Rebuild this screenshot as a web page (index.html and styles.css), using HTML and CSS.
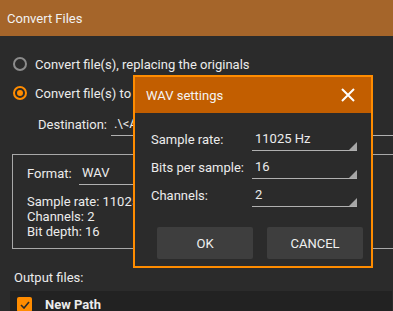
FILE: index.html
```html
<!DOCTYPE html>
<html lang="en">
<head>
    <meta charset="UTF-8">
    <title>Convert Files</title>
    <link rel="stylesheet" href="styles.css">
</head>
<body>
    <div class="titlebar">Convert Files</div>

    <div class="content">
        <label class="radio-row">
            <span class="radio"></span>
            <span>Convert file(s), replacing the originals</span>
        </label>
        <label class="radio-row">
            <span class="radio checked"></span>
            <span>Convert file(s) to a new location</span>
        </label>
        <div class="dest-row">
            <span class="dest-label">Destination:</span>
            <span class="dest-input">.\&lt;Artist&gt;\&lt;Album&gt;</span>
        </div>

        <div class="format-box">
            <div class="format-row">
                <span>Format:</span>
                <span class="format-select">WAV</span>
            </div>
            <div class="format-info">
                <div>Sample rate: 11025 Hz</div>
                <div>Channels: 2</div>
                <div>Bit depth: 16</div>
            </div>
        </div>

        <div class="output-label">Output files:</div>
        <div class="output-row">
            <span class="checkbox">
                <svg width="10" height="8" viewBox="0 0 10 8"><path d="M1 4 L4 7 L9 1" fill="none" stroke="#2a2a2a" stroke-width="1.6"/></svg>
            </span>
            <span class="output-name">New Path</span>
        </div>
    </div>

    <div class="dialog">
        <div class="dialog-header">
            <span>WAV settings</span>
            <svg class="close" width="14" height="14" viewBox="0 0 14 14"><path d="M1 1 L13 13 M13 1 L1 13" stroke="#fff" stroke-width="2"/></svg>
        </div>
        <div class="dialog-body">
            <div class="field">
                <span>Sample rate:</span>
                <span class="select">11025 Hz</span>
            </div>
            <div class="field">
                <span>Bits per sample:</span>
                <span class="select">16</span>
            </div>
            <div class="field">
                <span>Channels:</span>
                <span class="select">2</span>
            </div>
            <div class="buttons">
                <button class="btn">OK</button>
                <button class="btn">CANCEL</button>
            </div>
        </div>
    </div>
</body>
</html>
```

FILE: styles.css
```css
body {
    margin: 0;
    background: #2b2b2b;
    color: #ececec;
    font-family: Roboto, "Liberation Sans", sans-serif;
    font-size: 13px;
    overflow: hidden;
    height: 311px;
}
.titlebar {
    height: 36px;
    background: #a5652a;
    display: flex;
    align-items: center;
    padding-left: 7px;
    color: #f2f2f2;
}
.content {
    padding-top: 20px;
}
.radio-row {
    display: flex;
    align-items: center;
    gap: 8px;
    height: 16px;
    padding-left: 13px;
    margin-bottom: 13px;
}
.radio {
    width: 10px;
    height: 10px;
    border: 2px solid #8c8c8c;
    border-radius: 50%;
    position: relative;
}
.radio.checked {
    border-color: #ff8c00;
}
.radio.checked::after {
    content: "";
    position: absolute;
    left: 2px;
    top: 2px;
    width: 6px;
    height: 6px;
    border-radius: 50%;
    background: #ff8c00;
}
.dest-row {
    display: flex;
    align-items: flex-end;
    padding-left: 38px;
    margin-top: 1px;
    height: 22px;
}
.dest-label {
    width: 73px;
    padding-bottom: 4px;
}
.dest-input {
    flex: 1;
    padding-left: 3px;
    padding-bottom: 4px;
    border-bottom: 1px solid #b0b0b0;
}
.format-box {
    margin: 18px 0 0 12px;
    border: 1px solid #a8a8a8;
    border-right: none;
    height: 93px;
    padding-left: 14px;
}
.format-row {
    display: flex;
    align-items: flex-end;
    height: 30px;
}
.format-row span:first-child {
    width: 52px;
    padding-bottom: 4px;
}
.format-select {
    width: 118px;
    padding-left: 3px;
    padding-bottom: 4px;
    border-bottom: 1px solid #b0b0b0;
}
.format-info {
    margin-top: 9px;
    line-height: 15px;
}
.output-label {
    margin-top: 21px;
    padding-left: 14px;
}
.output-row {
    margin: 6px 1px 0 10px;
    background: #222222;
    height: 30px;
    display: flex;
    align-items: flex-start;
    padding-top: 6px;
    padding-left: 7px;
    box-sizing: border-box;
}
.checkbox {
    width: 15px;
    height: 15px;
    background: #ff8c00;
    border-radius: 2px;
    display: flex;
    align-items: center;
    justify-content: center;
}
.output-name {
    margin-left: 13px;
    font-weight: bold;
    line-height: 15px;
}
.dialog {
    position: absolute;
    left: 133px;
    top: 75px;
    width: 236px;
    height: 189px;
    border: 2px solid #ff8c00;
    background: #2b2b2b;
}
.dialog-header {
    height: 36px;
    background: #c25e00;
    display: flex;
    align-items: center;
    justify-content: space-between;
    padding: 0 16px 0 11px;
    color: #f4f4f4;
}
.dialog-body {
    padding: 10px 0 0 16px;
}
.field {
    display: grid;
    grid-template-columns: 101px 105px;
    align-items: end;
    height: 28px;
}
.field span:first-child {
    padding-bottom: 4px;
}
.select {
    position: relative;
    padding-left: 3px;
    padding-bottom: 4px;
    border-bottom: 1px solid #b0b0b0;
}
.select::after {
    content: "";
    position: absolute;
    right: 0;
    bottom: 0;
    border-left: 8px solid transparent;
    border-bottom: 8px solid #a6a6a6;
}
.buttons {
    display: flex;
    gap: 14px;
    margin-top: 20px;
    padding-left: 6px;
}
.btn {
    flex: none;
    width: 96px;
    height: 32px;
    border: none;
    border-radius: 2px;
    background: #3e3e3e;
    color: #f0f0f0;
    font-family: Roboto, "Liberation Sans", sans-serif;
    font-size: 13px;
}
```
